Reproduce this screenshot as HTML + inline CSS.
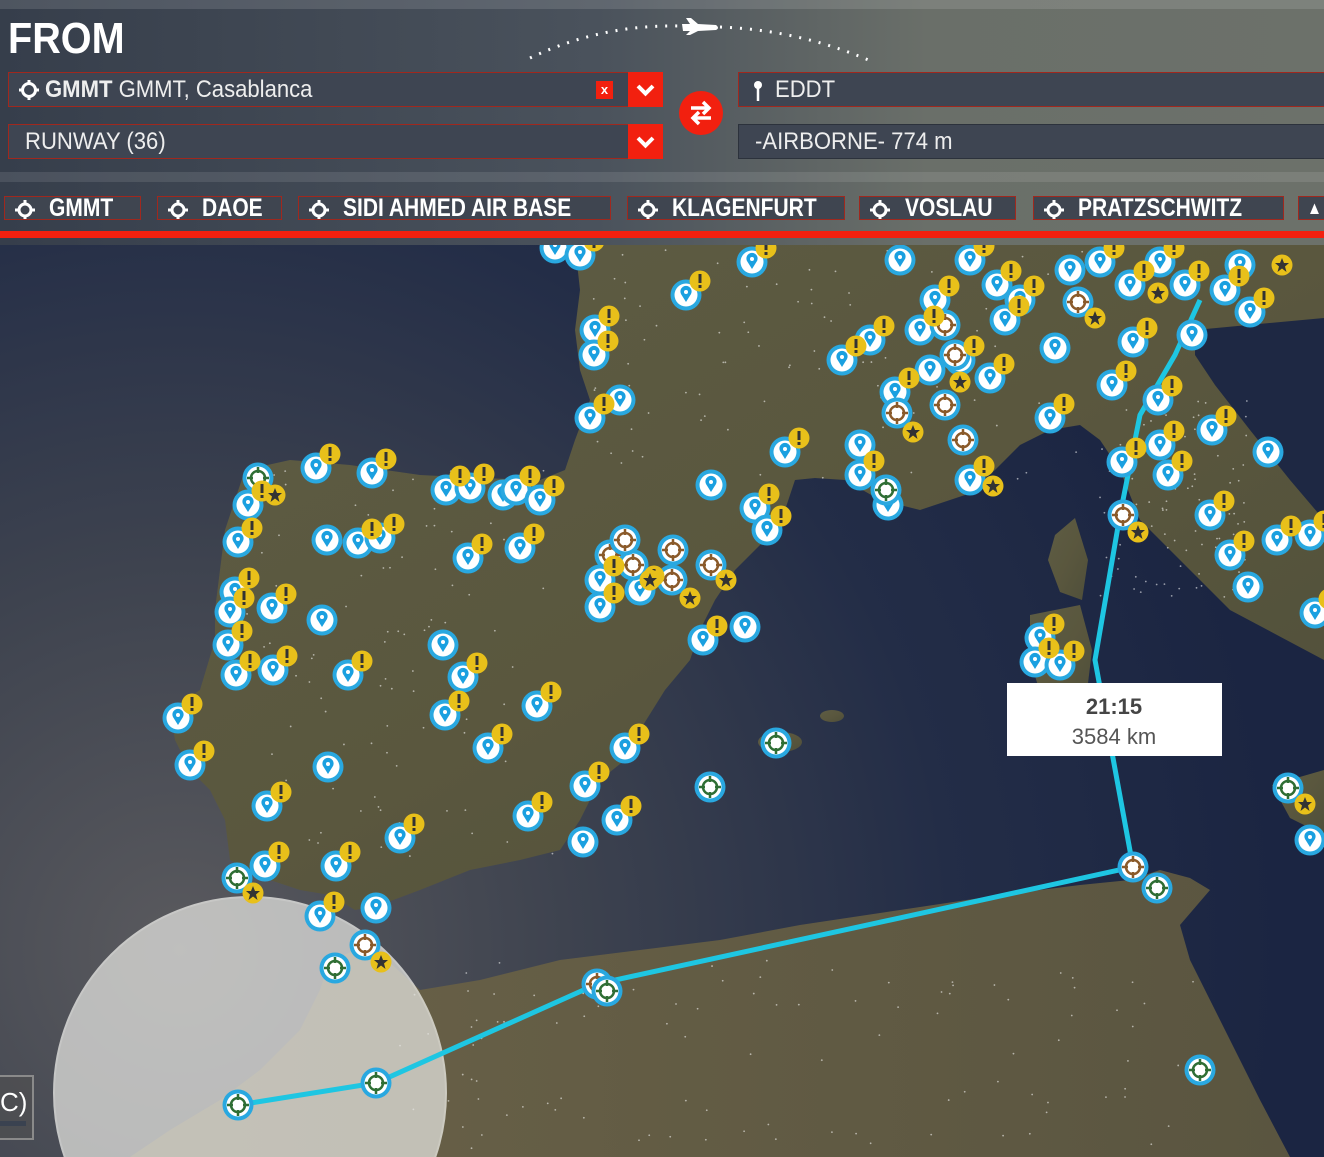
<!DOCTYPE html>
<html><head><meta charset="utf-8"><style>
*{margin:0;padding:0;box-sizing:border-box}
html,body{width:1324px;height:1157px;overflow:hidden}
body{font-family:"Liberation Sans",sans-serif;background:#2a3348;position:relative}
#hdr{position:absolute;left:0;top:0;width:1324px;height:245px;background:linear-gradient(90deg,#363e4b 0%,#4a525c 45%,#6a6f69 70%,#6c716a 100%)}
.strip{position:absolute;left:0;width:1324px}
.fld{position:absolute;height:35px;background:#3e4552;border:1px solid #a0281e;color:#eee;font-size:24px;line-height:33px;white-space:nowrap;overflow:hidden}
.fld span{transform:scaleX(0.92);transform-origin:left center;display:inline-block}
.btn{position:absolute;width:35px;height:35px;background:#f2200f}
.chip{position:absolute;top:196px;height:24px;background:#3f4550;border:1px solid #a0281e;color:#fff;font-weight:bold;font-size:25px;line-height:23px;white-space:nowrap;overflow:hidden}
.chip svg{position:absolute;left:10px;top:3px}
.chip span{position:absolute;top:0;transform:scaleX(0.84);transform-origin:left center}
</style></head><body>
<div id="hdr">
 <div class="strip" style="top:0;height:9px;background:rgba(255,255,255,0.12)"></div>
 <div class="strip" style="top:172px;height:10px;background:rgba(255,255,255,0.10)"></div>
 <svg width="1324" height="172" style="position:absolute;left:0;top:0">
  <path d="M530 58 Q610 20 700 27" stroke="#fff" stroke-width="3" stroke-dasharray="2 8" fill="none"/>
  <path d="M720 27 Q800 30 873 62" stroke="#fff" stroke-width="3" stroke-dasharray="2 8" fill="none"/>
  <path d="M682 24 L690 24 L686 18 L691 18 L698 24 L716 25 Q720 28 716 30 L698 31 L690 35 L686 35 L690 31 L683 31Z" fill="#fff"/>
 </svg>
 <div style="position:absolute;left:8px;top:14px;color:#fff;font-weight:bold;font-size:44px;line-height:50px;transform:scaleX(0.9);transform-origin:left">FROM</div>
 <div class="fld" style="left:8px;top:72px;width:621px"><svg width="24" height="24" style="position:absolute;left:8px;top:5px"><circle cx="12" cy="12" r="6.5" stroke="#fff" stroke-width="3" fill="none"/><path d="M12 2v5M12 17v5M2 12h5M17 12h5" stroke="#fff" stroke-width="3"/></svg><span style="position:absolute;left:36px"><b>GMMT</b> GMMT, Casablanca</span>
  <div style="position:absolute;left:587px;top:8px;width:17px;height:18px;background:#f2200f;color:#fff;font-size:13px;line-height:18px;text-align:center;font-weight:bold">x</div></div>
 <div class="btn" style="left:628px;top:72px"><svg width="35" height="35"><path d="M10 14l7.5 7.5L25 14" stroke="#fff" stroke-width="4" fill="none"/></svg></div>
 <div class="fld" style="left:8px;top:124px;width:621px"><span style="position:absolute;left:16px">RUNWAY (36)</span></div>
 <div class="btn" style="left:628px;top:124px"><svg width="35" height="35"><path d="M10 14l7.5 7.5L25 14" stroke="#fff" stroke-width="4" fill="none"/></svg></div>
 <svg width="46" height="46" style="position:absolute;left:678px;top:90px"><circle cx="23" cy="23" r="22" fill="#f2200f"/><path d="M13 18h17M25 12l6 6-6 6M33 28H16M21 22l-6 6 6 6" stroke="#fff" stroke-width="3.5" fill="none"/></svg>
 <div class="fld" style="left:738px;top:72px;width:600px"><svg width="14" height="24" style="position:absolute;left:12px;top:6px"><circle cx="7" cy="6" r="4" fill="#fff"/><path d="M7 8v14" stroke="#fff" stroke-width="2.5"/></svg><span style="position:absolute;left:36px">EDDT</span></div>
 <div class="fld" style="left:738px;top:124px;width:600px;border-color:#2c323c"><span style="position:absolute;left:16px">-AIRBORNE- 774 m</span></div>
 <div class="chip" style="left:4px;width:137px"><svg width="20" height="20"><circle cx="10" cy="10" r="6" stroke="#fff" stroke-width="3" fill="none"/><path d="M10 0v4M10 16v4M0 10h4M16 10h4" stroke="#fff" stroke-width="3"/></svg><span style="left:44px">GMMT</span></div>
 <div class="chip" style="left:157px;width:125px"><svg width="20" height="20"><circle cx="10" cy="10" r="6" stroke="#fff" stroke-width="3" fill="none"/><path d="M10 0v4M10 16v4M0 10h4M16 10h4" stroke="#fff" stroke-width="3"/></svg><span style="left:44px">DAOE</span></div>
 <div class="chip" style="left:298px;width:313px"><svg width="20" height="20"><circle cx="10" cy="10" r="6" stroke="#fff" stroke-width="3" fill="none"/><path d="M10 0v4M10 16v4M0 10h4M16 10h4" stroke="#fff" stroke-width="3"/></svg><span style="left:44px">SIDI AHMED AIR BASE</span></div>
 <div class="chip" style="left:627px;width:218px"><svg width="20" height="20"><circle cx="10" cy="10" r="6" stroke="#fff" stroke-width="3" fill="none"/><path d="M10 0v4M10 16v4M0 10h4M16 10h4" stroke="#fff" stroke-width="3"/></svg><span style="left:44px">KLAGENFURT</span></div>
 <div class="chip" style="left:859px;width:157px"><svg width="20" height="20"><circle cx="10" cy="10" r="6" stroke="#fff" stroke-width="3" fill="none"/><path d="M10 0v4M10 16v4M0 10h4M16 10h4" stroke="#fff" stroke-width="3"/></svg><span style="left:45px">VOSLAU</span></div>
 <div class="chip" style="left:1033px;width:251px"><svg width="20" height="20"><circle cx="10" cy="10" r="6" stroke="#fff" stroke-width="3" fill="none"/><path d="M10 0v4M10 16v4M0 10h4M16 10h4" stroke="#fff" stroke-width="3"/></svg><span style="left:44px">PRATZSCHWITZ</span></div>
 <div class="chip" style="left:1298px;width:40px"><span style="left:8px;font-size:18px">▲</span></div>
 <div class="strip" style="top:231px;height:7px;background:#f2200f"></div>
</div>
<svg id="map" width="1324" height="912" style="position:absolute;left:0;top:245px" viewBox="0 245 1324 912">
 <defs>
  <radialGradient id="sea" cx="180" cy="950" r="1100" gradientUnits="userSpaceOnUse">
   <stop offset="0" stop-color="#5a5a5e"/><stop offset="0.35" stop-color="#3e434f"/><stop offset="0.7" stop-color="#232d47"/><stop offset="1" stop-color="#1b2542"/>
  </radialGradient>
  <linearGradient id="land" x1="0" y1="0" x2="1" y2="1"><stop offset="0" stop-color="#5d5c44"/><stop offset="0.5" stop-color="#5a573e"/><stop offset="1" stop-color="#4f4f3a"/></linearGradient>
  <linearGradient id="afr" x1="0" y1="0" x2="1" y2="0"><stop offset="0" stop-color="#6a6248"/><stop offset="1" stop-color="#5a5540"/></linearGradient>
  <g id="pin"><circle r="15.5" fill="#29a8e0"/><circle r="11.5" fill="#fff"/><path d="M0 7 L-5 -1 A5.6 5.6 0 1 1 5 -1 Z" fill="#1aa0e0"/><circle cy="-3" r="2" fill="#fff"/></g>
  <g id="tb"><circle r="15.5" fill="#29a8e0"/><circle r="11.5" fill="#fff"/><circle r="7" fill="none" stroke="#8a5a2a" stroke-width="2.5"/><path d="M0-11v6M0 5v6M-11 0h6M5 0h6" stroke="#8a5a2a" stroke-width="2.5"/></g>
  <g id="tg"><circle r="15.5" fill="#29a8e0"/><circle r="11.5" fill="#fff"/><circle r="7" fill="none" stroke="#2f6e34" stroke-width="2.5"/><path d="M0-11v6M0 5v6M-11 0h6M5 0h6" stroke="#2f6e34" stroke-width="2.5"/></g>
  <g id="wn"><circle r="10.5" fill="#e8c01a"/><rect x="-1.5" y="-7" width="3" height="9" fill="#333"/><rect x="-1.5" y="4" width="3" height="3" fill="#333"/></g>
  <g id="st"><circle r="10.5" fill="#e8c01a"/><path d="M0-7 L2 -2 L7 -2 L3 1.5 L4.5 7 L0 3.5 L-4.5 7 L-3 1.5 L-7 -2 L-2 -2Z" fill="#333"/></g>
 </defs>
 <rect x="0" y="245" width="1324" height="912" fill="url(#sea)"/>
 <polygon fill="url(#land)" points="575,245 1324,245 1324,660 1230,610 1180,560 1140,520 1120,470 1100,440 1080,425 1050,430 1020,445 995,470 965,495 920,510 880,500 845,480 815,478 795,480 785,510 765,540 735,570 715,600 700,630 690,660 665,690 640,730 625,760 600,780 580,820 560,850 520,860 470,870 420,890 380,905 355,910 330,895 300,890 270,880 250,870 230,860 225,820 210,790 190,770 175,740 170,710 200,690 215,640 215,610 220,570 225,530 235,500 245,470 290,460 350,465 420,475 480,478 540,480 565,470 575,440 590,400 580,370 575,330 580,290"/>
 <polygon fill="#1e2843" points="1195,330 1324,318 1324,520 1290,480 1250,430 1215,385 1195,355"/>
 <polygon fill="url(#land)" points="1055,535 1075,518 1088,560 1082,600 1060,592 1048,560"/>
 <polygon fill="url(#land)" points="1030,615 1080,605 1092,650 1086,700 1045,708 1030,660"/>
 <polygon fill="url(#land)" points="1272,785 1324,770 1324,835 1290,818"/>
 <ellipse cx="780" cy="742" rx="22" ry="10" fill="url(#land)"/><ellipse cx="832" cy="716" rx="12" ry="6" fill="url(#land)"/>
 <polygon fill="url(#afr)" points="330,960 370,945 420,990 480,980 560,960 640,950 720,940 800,925 900,910 1000,895 1080,885 1130,880 1160,870 1190,878 1210,890 1180,925 1190,960 1210,1000 1230,1040 1260,1100 1290,1157 130,1157 170,1130 220,1100 260,1070 300,1030 320,990"/>
 <g id="dots" fill="#fff" opacity="0.55"></g>
 <circle cx="250" cy="1093" r="196" fill="#e6e6e2" opacity="0.72" stroke="#f4f4f0" stroke-width="2"/>
 <polyline points="238,1105 376,1083 597,984 1133,867 1095,660 1120,515 1140,415 1175,355 1200,300" fill="none" stroke="#1ec6e2" stroke-width="5"/>
 <g id="mk"></g>
 <rect x="1007" y="683" width="215" height="73" fill="#fff"/>
 <text x="1114" y="714" text-anchor="middle" font-family="Liberation Sans" font-weight="bold" font-size="22" fill="#454545">21:15</text>
 <text x="1114" y="744" text-anchor="middle" font-family="Liberation Sans" font-size="22" fill="#555">3584 km</text>
</svg>
<div style="position:absolute;left:-4px;top:1075px;width:38px;height:65px;border:2px solid #8a8a8a;background:rgba(80,80,80,0.6);color:#fff;font-size:26px;line-height:50px;padding-left:2px;overflow:hidden">C)<div style="position:absolute;left:0;top:44px;width:28px;height:5px;background:#3a4250"></div></div>
<script>
var NS="http://www.w3.org/2000/svg";
var mk=document.getElementById("mk");
function u(id,x,y){var e=document.createElementNS(NS,"use");e.setAttribute("href","#"+id);e.setAttribute("x",x);e.setAttribute("y",y);mk.appendChild(e);}
var pins=[[555,248],[580,255],[752,262],[900,260],[686,295],[595,330],[594,355],[590,418],[620,400],[316,468],[372,473],[446,490],[470,488],[503,495],[516,490],[540,500],[248,505],[238,542],[327,540],[358,543],[380,538],[468,558],[520,548],[711,485],[755,508],[767,530],[785,452],[860,475],[888,505],[970,480],[935,300],[970,260],[997,285],[1070,270],[1130,285],[1185,285],[1225,290],[1250,312],[1055,348],[1133,342],[1158,400],[1112,385],[1050,418],[1192,335],[1122,462],[1160,445],[1168,475],[1212,430],[1268,452],[1210,515],[1230,555],[1277,540],[1310,535],[1248,587],[1315,613],[235,592],[230,612],[272,608],[322,620],[228,645],[236,675],[273,670],[348,675],[443,645],[463,677],[445,715],[537,706],[488,748],[328,767],[267,806],[585,786],[528,816],[617,820],[583,842],[400,838],[265,866],[336,866],[320,916],[376,908],[190,765],[178,718],[600,607],[703,640],[745,627],[625,748],[1040,638],[1035,662],[1060,665],[1310,840],[842,360],[870,340],[990,378],[895,392],[860,445],[1005,320],[1020,300],[920,330],[960,360],[930,370],[1100,262],[1160,262],[600,580],[640,590],[1240,265]];
var tb=[[610,555],[633,565],[673,550],[672,580],[711,565],[1078,302],[945,405],[897,413],[963,440],[1123,515],[1133,867],[597,984],[365,945],[945,325],[955,355],[625,540]];
var tg=[[258,478],[237,878],[335,968],[376,1083],[238,1105],[776,743],[710,787],[1157,888],[1200,1070],[607,991],[1288,788],[886,490]];
var stars=[[275,495],[253,893],[381,962],[1138,532],[1158,293],[1095,318],[1282,265],[913,432],[960,382],[993,486],[690,598],[726,580],[650,580],[1305,804]];
pins.forEach(function(p){u("pin",p[0],p[1]);});
tb.forEach(function(p){u("tb",p[0],p[1]);});tg.forEach(function(p){u("tg",p[0],p[1]);});
pins.forEach(function(p,k){if(k%5!=3)u("wn",p[0]+14,p[1]-14);});
stars.forEach(function(p){u("st",p[0],p[1]);});
var d=document.getElementById("dots"),s=7;function r(){s=(s*9301+49297)%233280;return s/233280;}
var boxes=[[230,470,560,860],[580,250,1100,480],[1100,400,1250,600],[400,960,1200,1150]];
for(var n=0;n<400;n++){var b=boxes[n%4];var c=document.createElementNS(NS,"circle");c.setAttribute("cx",b[0]+r()*(b[2]-b[0]));c.setAttribute("cy",b[1]+r()*(b[3]-b[1]));c.setAttribute("r",0.9);d.appendChild(c);}
</script>
</body></html>
